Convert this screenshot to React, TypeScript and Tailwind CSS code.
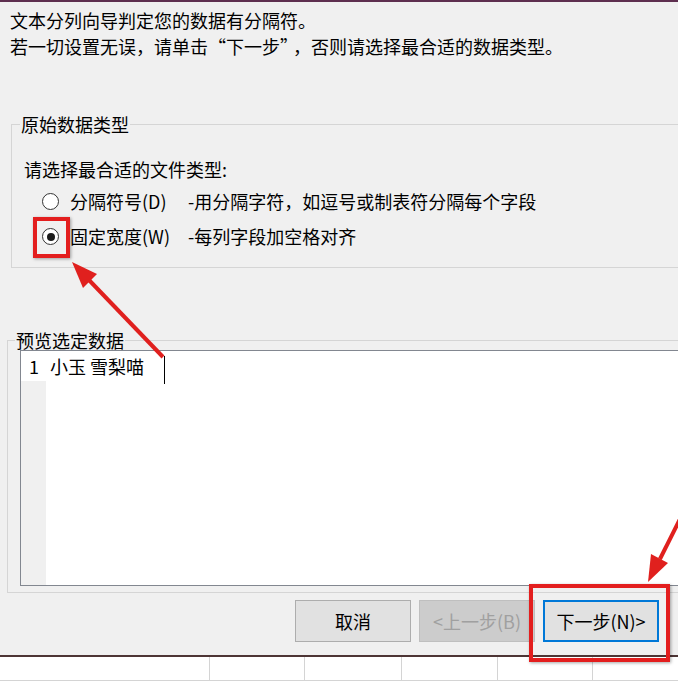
import React from "react";

const Radio = ({ checked = false }: { checked?: boolean }) => {
  return (
    <span className="w-[17px] h-[17px] rounded-full border border-[#333333] bg-white flex items-center justify-center shrink-0">
      {checked && <span className="w-[8px] h-[8px] rounded-full bg-[#1a1a1a]" />}
    </span>
  );
};

const WizButton = ({
  label,
  disabled = false,
  focused = false,
}: {
  label: string;
  disabled?: boolean;
  focused?: boolean;
}) => {
  let cls =
    "w-[116px] h-[42px] flex items-center justify-center text-[18px] leading-none ";
  if (disabled) {
    cls += "bg-[#cccccc] border border-[#bfbfbf] text-[#a0a0a0]";
  } else if (focused) {
    cls += "bg-[#e1e1e1] border-2 border-[#0078d7] text-black";
  } else {
    cls += "bg-[#e1e1e1] border border-[#adadad] text-black";
  }
  return <div className={cls}>{label}</div>;
};

export default function App() {
  return (
    <div
      className="w-[678px] h-[685px] bg-[#f0f0f0] relative overflow-hidden text-black"
      style={{ fontFamily: '"Noto Sans CJK SC", "Noto Sans", sans-serif' }}
    >
      {/* window top edge */}
      <div className="h-[2px] bg-[#5e2f4f]" />

      {/* intro text */}
      <div className="pl-[10px] pt-[5px] text-[18px] leading-[26px]">
        <div>文本分列向导判定您的数据有分隔符。</div>
        <div>
          若一切设置无误，请单击<span className="pr-[4px]">“下一步”</span>，否则请选择最合适的数据类型。
        </div>
      </div>

      {/* 原始数据类型 */}
      <fieldset className="ml-[11px] mt-[55px] w-[800px] border border-[#d5d5d5] pl-[12px] pb-[13px]">
        <legend className="ml-[-4px] px-[1px] text-[18px] leading-[20px]">
          原始数据类型
        </legend>
        <div className="mt-[22px] text-[18px] leading-[26px]">
          请选择最合适的文件类型:
        </div>
        <div className="mt-[2px] text-[18px]">
          <div className="h-[35px] flex items-center pl-[18px]">
            <Radio />
            <span className="ml-[11px] w-[118px]">分隔符号(D)</span>
            <span>-用分隔字符，如逗号或制表符分隔每个字段</span>
          </div>
          <div className="h-[35px] flex items-center pl-[18px]">
            <Radio checked />
            <span className="ml-[11px] w-[118px]">固定宽度(W)</span>
            <span>-每列字段加空格对齐</span>
          </div>
        </div>
      </fieldset>

      {/* 预览选定数据 */}
      <fieldset className="ml-[7px] mt-[62px] w-[800px] border border-[#d5d5d5] pl-[12px] pb-[6px]">
        <legend className="ml-[-5px] px-[1px] text-[18px] leading-[20px]">
          预览选定数据
        </legend>
        <div className="h-[236px] border border-[#828790] bg-white flex">
          <div className="w-[25px] flex flex-col">
            <div className="h-[30px] bg-white text-[18px] leading-[30px] text-right pr-[7px]">
              1
            </div>
            <div className="flex-1 bg-[#f0f0f0]" />
          </div>
          <div className="pl-[4px] flex items-start">
            <span className="text-[18px] leading-[30px]">小玉 雪梨喵</span>
            <span className="ml-[20px] mt-[5px] w-px h-[28px] bg-black" />
          </div>
        </div>
      </fieldset>

      {/* buttons */}
      <div className="mt-[7px] flex justify-end gap-[8px] pr-[19px]">
        <WizButton label="取消" />
        <WizButton label="<上一步(B)" disabled />
        <WizButton label="下一步(N)>" focused />
      </div>

      {/* window bottom edge + sheet grid */}
      <div className="mt-[13px] h-[2px] bg-[#4d3535]" />
      <div className="bg-white h-[40px] flex">
        <div className="w-[210px] h-[24px] border-r border-b border-[#d4d4d4]" />
        <div className="w-[95px] h-[24px] border-r border-b border-[#d4d4d4]" />
        <div className="w-[97px] h-[24px] border-r border-b border-[#d4d4d4]" />
        <div className="w-[96px] h-[24px] border-r border-b border-[#d4d4d4]" />
        <div className="w-[95px] h-[24px] border-r border-b border-[#d4d4d4]" />
        <div className="flex-1 h-[24px] border-b border-[#d4d4d4]" />
      </div>

      {/* annotations */}
      <div className="absolute left-[33px] top-[217px] w-[37px] h-[41px] border-[4px] border-[#e31e1e] shadow-[1px_1px_3px_rgba(0,0,0,0.35)]" />
      <div className="absolute left-[529px] top-[584px] w-[141px] h-[78px] border-[4px] border-[#e31e1e] shadow-[1px_1px_3px_rgba(0,0,0,0.35)]" />
      <svg
        className="absolute left-0 top-0 pointer-events-none"
        width="678"
        height="685"
        viewBox="0 0 678 685"
      >
        <line x1="163" y1="357" x2="88" y2="279" stroke="#e0201e" strokeWidth="4" />
        <polygon points="72,262 97,274 83,288" fill="#e0201e" />
        <line x1="692" y1="495" x2="660" y2="559" stroke="#e0201e" strokeWidth="4" />
        <polygon points="648,582 668,563 651,554" fill="#e0201e" />
      </svg>
    </div>
  );
}
